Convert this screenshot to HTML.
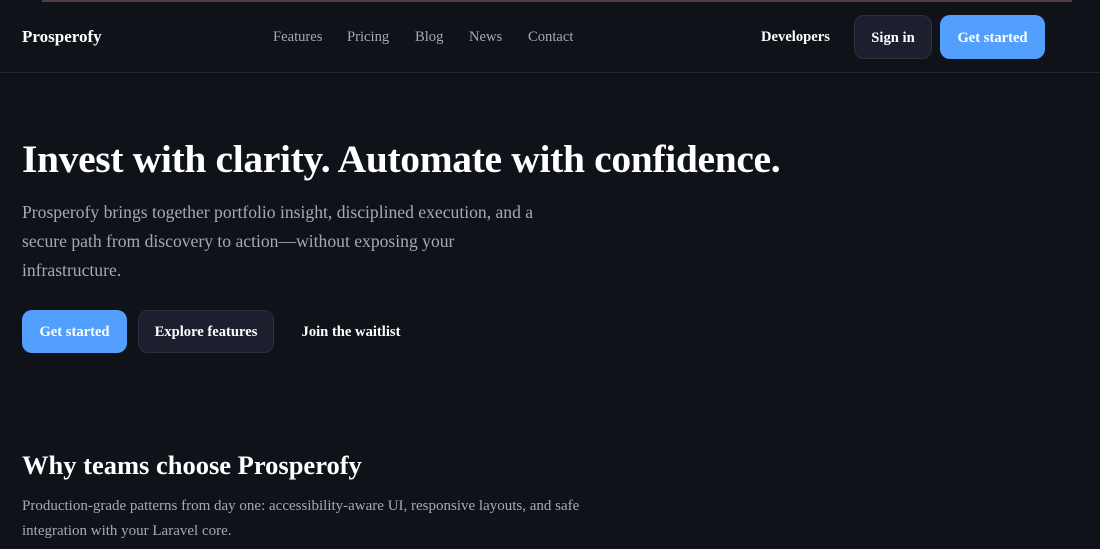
<!DOCTYPE html>
<html><head><meta charset="utf-8"><style>
*{margin:0;padding:0;box-sizing:border-box}
body{width:1100px;height:549px;overflow:hidden;background:#10121a;font-family:"Liberation Serif",serif;color:#fff;position:relative}
.topline{position:absolute;top:0;left:42px;width:1030px;height:2px;background:#5a3a40}
header{position:absolute;top:0;left:0;width:1100px;height:73px;border-bottom:1px solid #23262f}
.logo{position:absolute;left:22px;top:27px;font-size:17px;font-weight:bold}
nav a{position:absolute;top:29px;font-size:14.6px;color:#a3a9b8;text-decoration:none}
.dev{position:absolute;left:761px;top:29px;font-size:14.6px;font-weight:bold}
.btn{position:absolute;display:flex;align-items:center;justify-content:center;border-radius:10px;font-weight:bold;font-size:14.6px;padding-top:2px}
.dark{background:#1c1f2e;border:1px solid #2c3040}
.blue{background:#539ffd}
h1{position:absolute;left:22px;top:136px;font-size:39.5px;font-weight:bold;letter-spacing:-0.33px;white-space:nowrap}
p.lead{position:absolute;left:22px;top:198px;width:535px;font-size:17.6px;line-height:29px;color:#a3a9b8}
h2{position:absolute;left:22px;top:450px;font-size:26.5px;font-weight:bold}
p.sub{position:absolute;left:22px;top:494px;width:600px;font-size:15px;line-height:25px;color:#a3a9b8}
</style></head><body>
<div class="topline"></div>
<header>
<div class="logo">Prosperofy</div>
<nav><a style="left:273px">Features</a><a style="left:347px">Pricing</a><a style="left:415px">Blog</a><a style="left:469px">News</a><a style="left:528px">Contact</a></nav>
<div class="dev">Developers</div>
<div class="btn dark" style="left:854px;top:15px;width:78px;height:44px">Sign in</div>
<div class="btn blue" style="left:940px;top:15px;width:105px;height:44px">Get started</div>
</header>
<h1>Invest with clarity. Automate with confidence.</h1>
<p class="lead">Prosperofy brings together portfolio insight, disciplined execution, and a secure path from discovery to action—without exposing your infrastructure.</p>
<div class="btn blue" style="left:22px;top:310px;width:105px;height:43px">Get started</div>
<div class="btn dark" style="left:138px;top:310px;width:136px;height:43px">Explore features</div>
<div class="btn" style="left:290px;top:310px;width:122px;height:43px">Join the waitlist</div>
<h2>Why teams choose Prosperofy</h2>
<p class="sub">Production-grade patterns from day one: accessibility-aware UI, responsive layouts, and safe integration with your Laravel core.</p>
</body></html>
